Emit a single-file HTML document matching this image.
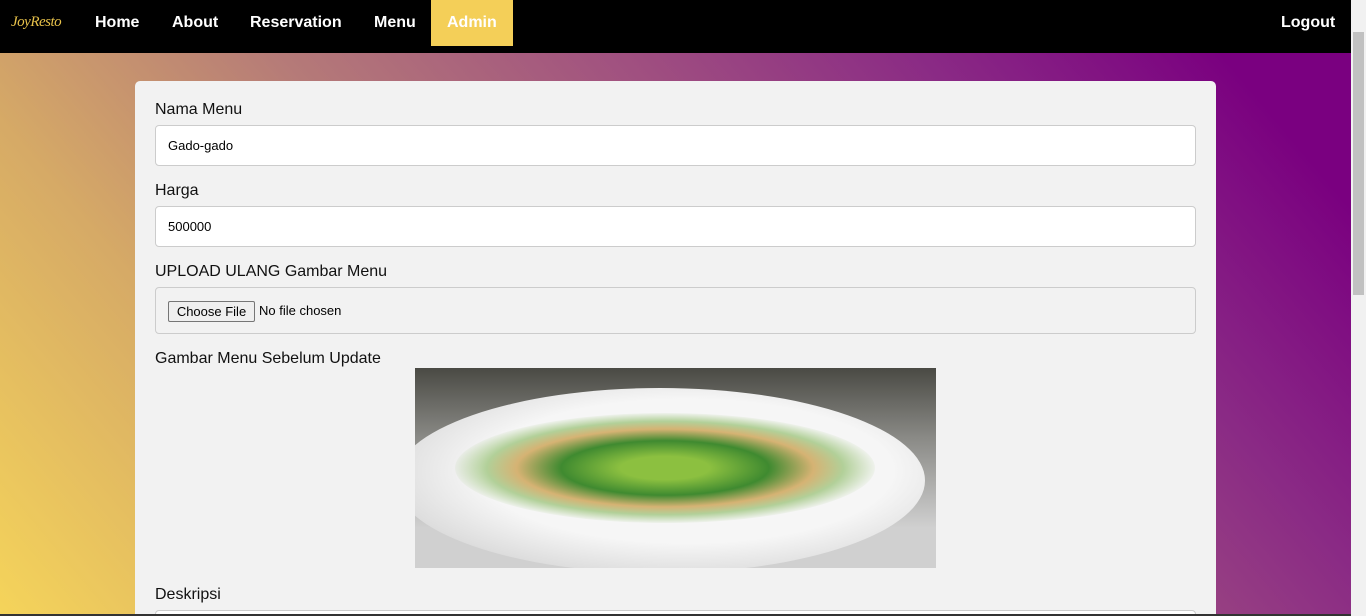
<!DOCTYPE html>
<html><head><style>
html,body{margin:0;padding:0;width:1366px;height:616px;overflow:hidden;font-family:"Liberation Sans",Arial,sans-serif}
body{position:relative;background:linear-gradient(50deg,#f5d45a 0%,#d6aa66 22%,#b57a78 40%,#a05080 58%,#8a2a85 74%,#7a0080 90%,#7a0080 100%)}
.nav{position:absolute;left:0;top:0;width:1351px;height:53px;background:#000}
.logo{position:absolute;left:11px;top:14px;color:#e8c24a;font-family:"Liberation Serif",serif;font-style:italic;font-size:15px;letter-spacing:-0.5px}
.nav a{position:absolute;top:14px;color:#fff;font-weight:bold;font-size:16px}
.admin{position:absolute;left:431px;top:0;width:82px;height:46px;background:#f4cf58}
.sb{position:absolute;right:0;top:0;width:15px;height:616px;background:#f1f1f1}
.thumb{position:absolute;left:2px;top:32px;width:11px;height:263px;background:#c1c1c1}
.card{position:absolute;left:135px;top:81px;width:1081px;height:535px;overflow:hidden;background:#f2f2f2;border-radius:5px 5px 0 0}
label{position:absolute;left:20px;font-size:16px;color:#111}
.in{position:absolute;left:20px;width:1039px;height:39px;background:#fff;border:1px solid #ccc;border-radius:4px;font-size:13px;line-height:39px;text-indent:12px;color:#000}
.file{position:absolute;left:20px;top:206px;width:1039px;height:45px;border:1px solid #ccc;border-radius:4px;background:#f2f2f2}
.btn{position:absolute;left:12px;top:13px;width:85px;height:19px;border:1px solid #767676;border-radius:2px;background:#efefef;font-size:13px;line-height:19px;text-align:center}
.nf{position:absolute;left:103px;top:15px;font-size:13px}
.img{position:absolute;left:280px;top:287px;width:521px;height:200px;overflow:hidden;background:linear-gradient(180deg,#4a4a44,#8a8a86 35%,#d0d0d0 80%)}
.plate{position:absolute;left:-20px;top:20px;width:530px;height:185px;border-radius:50%;background:radial-gradient(ellipse at 55% 45%,#f6f6f6 50%,#dedede 72%,#b5b5b5 100%)}
.food{position:absolute;left:40px;top:45px;width:420px;height:110px;border-radius:50%;background:radial-gradient(ellipse,#8cc040 15%,#3f8a30 35%,rgba(200,150,60,.7) 50%,rgba(110,170,60,.5) 60%,transparent 72%)}
</style></head><body>
<div class="nav">
<div class="logo">JoyResto</div>
<a style="left:95px">Home</a><a style="left:172px">About</a><a style="left:250px">Reservation</a><a style="left:374px">Menu</a>
<div class="admin"></div><a style="left:447px">Admin</a>
<a style="left:1281px">Logout</a>
</div>
<div class="card">
<label style="top:20px">Nama Menu</label>
<div class="in" style="top:44px">Gado-gado</div>
<label style="top:101px">Harga</label>
<div class="in" style="top:125px">500000</div>
<label style="top:182px">UPLOAD ULANG Gambar Menu</label>
<div class="file"><div class="btn">Choose File</div><div class="nf">No file chosen</div></div>
<label style="top:269px">Gambar Menu Sebelum Update</label>
<div class="img"><div class="plate"></div><div class="food"></div></div>
<label style="top:505px">Deskripsi</label>
<div class="in" style="top:529px;height:20px"></div>
</div>
<div style="position:absolute;left:0;top:614px;width:1351px;height:2px;background:#333"></div>
<div class="sb"><div class="thumb"></div></div>
</body></html>
